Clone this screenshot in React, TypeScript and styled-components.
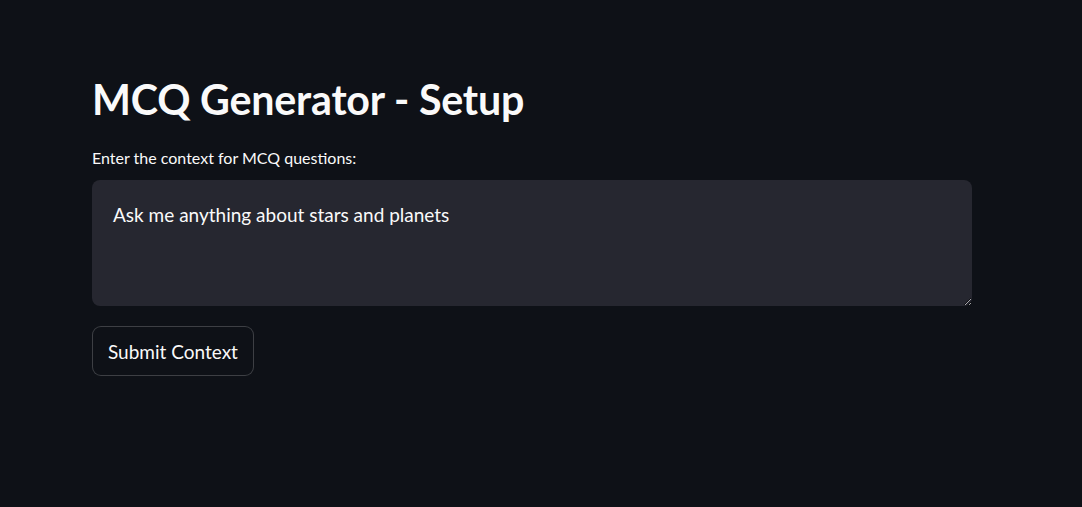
import React from "react";
import styled, { createGlobalStyle } from "styled-components";

const Global = createGlobalStyle`
  html, body { margin: 0; padding: 0; background: #0e1117; }
  body { font-family: Lato, "Noto Sans", sans-serif; color: #fafafa; color-scheme: dark; }
`;

const Main = styled.main`
  width: 880px;
  padding: 72px 0 0 92px;
  display: flex;
  flex-direction: column;
`;

const Title = styled.h1`
  margin: 0;
  font-size: 41.2px;
  font-weight: 700;
  line-height: 54px;
  letter-spacing: -0.2px;
  color: #fafafa;
`;

const Label = styled.label`
  margin-top: 21px;
  font-size: 16px;
  line-height: 22px;
  color: #fafafa;
`;

const TextArea = styled.textarea`
  margin-top: 11px;
  box-sizing: border-box;
  width: 880px;
  height: 126px;
  padding: 21px 21px 20px;
  border: none;
  border-radius: 8px;
  background: #262730;
  color: #fafafa;
  font-family: Lato, "Noto Sans", sans-serif;
  font-size: 19px;
  line-height: 28px;
  resize: vertical;
  outline: none;
`;

const Button = styled.button`
  margin-top: 20px;
  align-self: flex-start;
  height: 50px;
  padding: 0 15px;
  border: 1px solid rgba(250, 250, 250, 0.2);
  border-radius: 9px;
  background: #0e1117;
  color: #fafafa;
  font-family: Lato, "Noto Sans", sans-serif;
  font-size: 19px;
  cursor: pointer;
`;

export default function App() {
  return (
    <>
      <Global />
      <Main>
        <Title>MCQ Generator - Setup</Title>
        <Label htmlFor="ctx">Enter the context for MCQ questions:</Label>
        <TextArea id="ctx" defaultValue="Ask me anything about stars and planets" />
        <Button>Submit Context</Button>
      </Main>
    </>
  );
}
